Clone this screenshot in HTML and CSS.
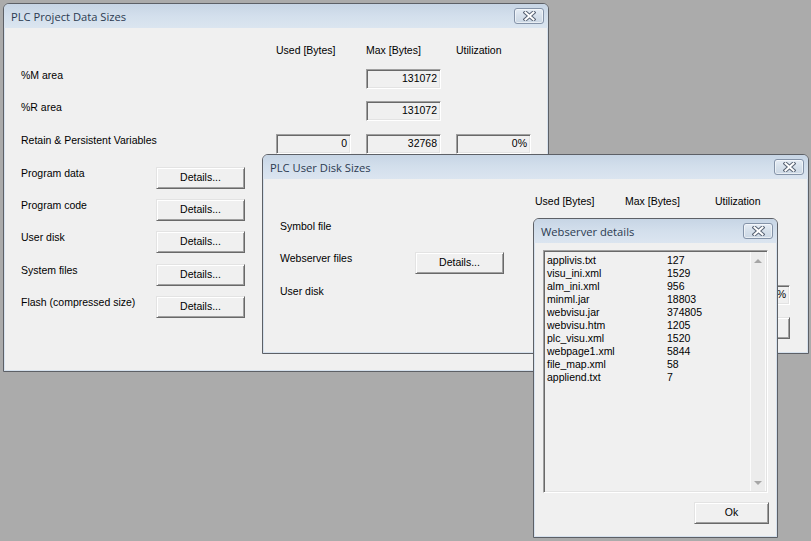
FILE: index.html
```html
<!DOCTYPE html>
<html>
<head>
<meta charset="utf-8">
<link rel="stylesheet" href="styles.css">
</head>
<body>
<div class="desktop">
  <section class="win win-data">
    <header class="titlebar">
      <span class="title">PLC Project Data Sizes</span>
      <span class="close"><svg width="13" height="10" viewBox="0 0 13 10"><path d="M2.5 1.5 L10.5 8.5 M10.5 1.5 L2.5 8.5" stroke="#5a6576" stroke-width="4" stroke-linecap="square" fill="none"/><path d="M2.5 1.5 L10.5 8.5 M10.5 1.5 L2.5 8.5" stroke="#fff" stroke-width="2" stroke-linecap="square" fill="none"/></svg></span>
    </header>
    <div class="body">
      <div class="grid grid-data">
        <div></div><div></div><div class="hdr">Used [Bytes]</div><div class="hdr">Max [Bytes]</div><div class="hdr">Utilization</div>
        <div class="lbl">%M area</div><div></div><div></div><div class="field">131072</div><div></div>
        <div class="lbl">%R area</div><div></div><div></div><div class="field">131072</div><div></div>
        <div class="lbl">Retain &amp; Persistent Variables</div><div></div><div class="field">0</div><div class="field">32768</div><div class="field">0%</div>
        <div class="lbl">Program data</div><div class="btn">Details...</div><div></div><div></div><div></div>
        <div class="lbl">Program code</div><div class="btn">Details...</div><div></div><div></div><div></div>
        <div class="lbl">User disk</div><div class="btn">Details...</div><div></div><div></div><div></div>
        <div class="lbl">System files</div><div class="btn">Details...</div><div></div><div></div><div></div>
        <div class="lbl">Flash (compressed size)</div><div class="btn">Details...</div><div></div><div></div><div></div>
      </div>
    </div>
  </section>

  <section class="win win-disk">
    <header class="titlebar">
      <span class="title">PLC User Disk Sizes</span>
      <span class="close"><svg width="13" height="10" viewBox="0 0 13 10"><path d="M2.5 1.5 L10.5 8.5 M10.5 1.5 L2.5 8.5" stroke="#5a6576" stroke-width="4" stroke-linecap="square" fill="none"/><path d="M2.5 1.5 L10.5 8.5 M10.5 1.5 L2.5 8.5" stroke="#fff" stroke-width="2" stroke-linecap="square" fill="none"/></svg></span>
    </header>
    <div class="body">
      <div class="grid grid-disk">
        <div></div><div></div><div class="hdr">Used [Bytes]</div><div class="hdr">Max [Bytes]</div><div class="hdr">Utilization</div>
        <div class="lbl">Symbol file</div><div></div><div></div><div></div><div></div>
        <div class="lbl">Webserver files</div><div class="btn">Details...</div><div></div><div></div><div></div>
        <div class="lbl">User disk</div><div></div><div></div><div></div><div class="field field-pct">%</div>
        <div></div><div></div><div></div><div></div><div class="btn btn-hidden"></div>
      </div>
    </div>
  </section>

  <section class="win win-web">
    <header class="titlebar">
      <span class="title">Webserver details</span>
      <span class="close"><svg width="13" height="10" viewBox="0 0 13 10"><path d="M2.5 1.5 L10.5 8.5 M10.5 1.5 L2.5 8.5" stroke="#5a6576" stroke-width="4" stroke-linecap="square" fill="none"/><path d="M2.5 1.5 L10.5 8.5 M10.5 1.5 L2.5 8.5" stroke="#fff" stroke-width="2" stroke-linecap="square" fill="none"/></svg></span>
    </header>
    <div class="body body-web">
      <div class="listbox">
        <div class="items">
          <div class="item"><span class="name">applivis.txt</span><span>127</span></div>
          <div class="item"><span class="name">visu_ini.xml</span><span>1529</span></div>
          <div class="item"><span class="name">alm_ini.xml</span><span>956</span></div>
          <div class="item"><span class="name">minml.jar</span><span>18803</span></div>
          <div class="item"><span class="name">webvisu.jar</span><span>374805</span></div>
          <div class="item"><span class="name">webvisu.htm</span><span>1205</span></div>
          <div class="item"><span class="name">plc_visu.xml</span><span>1520</span></div>
          <div class="item"><span class="name">webpage1.xml</span><span>5844</span></div>
          <div class="item"><span class="name">file_map.xml</span><span>58</span></div>
          <div class="item"><span class="name">appliend.txt</span><span>7</span></div>
        </div>
        <div class="scrollbar">
          <div class="arrow"><span class="tri-up"></span></div>
          <div class="arrow"><span class="tri-down"></span></div>
        </div>
      </div>
      <div class="actions">
        <div class="btn btn-ok">Ok</div>
      </div>
    </div>
  </section>
</div>
</body>
</html>
```

FILE: styles.css
```css
* { box-sizing: border-box; }

html, body {
  margin: 0;
  padding: 0;
  background: #ababab;
}

body {
  font-family: "Liberation Sans", Arial, sans-serif;
  font-size: 10.5px;
  color: #000;
}

.desktop {
  position: relative;
  width: 811px;
  height: 541px;
  overflow: hidden;
}

.win {
  position: absolute;
  display: flex;
  flex-direction: column;
  border: 1px solid #5d6066;
  border-radius: 6px 6px 0 0;
  background: #d6e1ed;
  padding: 0 1px 1px 1px;
  overflow: hidden;
}

.win-data { left: 3px; top: 3px; width: 546px; height: 369px; }
.win-disk { left: 262px; top: 154px; width: 547px; height: 200px; }
.win-web  { left: 533px; top: 218px; width: 245px; height: 320px; }

.titlebar {
  height: 24px;
  flex: 0 0 24px;
  margin: 0 -1px;
  display: flex;
  align-items: center;
  padding-left: 7px;
  padding-right: 4px;
  background: linear-gradient(to bottom, #c7d5e5 0%, #d3dfec 50%, #dbe5f0 100%);
}

.title {
  font-family: "Open Sans", "Noto Sans", sans-serif;
  font-size: 11.2px;
  color: #2b3a50;
}

.close {
  margin-left: auto;
  width: 30px;
  height: 16px;
  border: 1px solid #8493a8;
  border-radius: 3px;
  background: linear-gradient(to bottom, #e6edf5 0%, #d6e0eb 50%, #ccd8e5 100%);
  box-shadow: inset 0 0 0 1px rgba(255,255,255,0.55);
  display: flex;
  align-items: center;
  justify-content: center;
}

.close svg { display: block; }

.body {
  flex: 1;
  background: #f0f0f0;
  padding: 16px 0 0 16px;
}

.grid {
  display: grid;
  grid-template-columns: 135px 120px 90px 90px 75px;
}

.grid-data {
  grid-template-rows: 25px 32px 33px 33px 32px 32px 33px 32px 22px;
}

.grid-disk {
  grid-template-rows: 25px 32px 33px 32px 22px;
}

.hdr, .lbl {
  line-height: 13px;
  white-space: nowrap;
}

.field {
  width: 75px;
  height: 20px;
  border: 1px solid;
  border-color: #a0a0a0 #fff #fff #a0a0a0;
  box-shadow: inset 1px 1px 0 #696969, inset -1px -1px 0 #e3e3e3;
  background: #f0f0f0;
  text-align: right;
  padding-right: 3px;
  line-height: 17px;
  white-space: nowrap;
}

.btn {
  width: 89px;
  height: 22px;
  border: 1px solid;
  border-color: #e3e3e3 #696969 #696969 #e3e3e3;
  box-shadow: inset 1px 1px 0 #fff, inset -1px -1px 0 #a0a0a0;
  background: #f0f0f0;
  text-align: center;
  line-height: 19px;
}

.btn-hidden { width: 75px; }

.body-web {
  padding: 7px 8px 0 8px;
  display: flex;
  flex-direction: column;
}

.listbox {
  height: 243px;
  display: flex;
  border: 1px solid;
  border-color: #a0a0a0 #fff #fff #a0a0a0;
  box-shadow: inset 1px 1px 0 #696969, inset -1px -1px 0 #e3e3e3;
  background: #f0f0f0;
  padding: 1px;
}

.items {
  flex: 1;
  padding: 2px 0 0 2px;
}

.item {
  display: flex;
  height: 13px;
  line-height: 13px;
}

.item .name {
  width: 120px;
}

.scrollbar {
  width: 16px;
  display: flex;
  flex-direction: column;
  justify-content: space-between;
  border-left: 1px solid #fbfbfb;
  border-right: 1px solid #fbfbfb;
  background: #ececec;
}

.arrow {
  height: 17px;
  display: flex;
  align-items: center;
  justify-content: center;
}

.tri-up, .tri-down {
  width: 0;
  height: 0;
  border-left: 4px solid transparent;
  border-right: 4px solid transparent;
}

.tri-up { border-bottom: 4px solid #a6a6a6; }
.tri-down { border-top: 4px solid #a6a6a6; }

.actions {
  display: flex;
  justify-content: flex-end;
  padding-top: 9px;
  margin-right: -1px;
}

.btn-ok {
  width: 75px;
}
```
